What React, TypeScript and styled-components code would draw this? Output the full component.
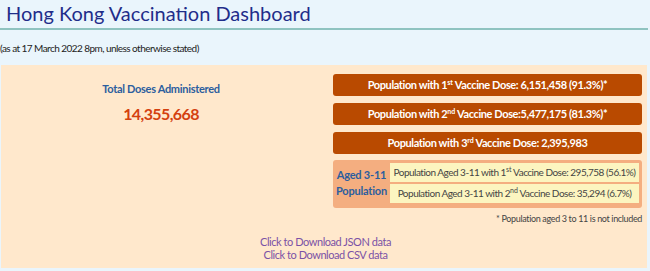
import React from "react";
import styled, { createGlobalStyle } from "styled-components";

const GlobalStyle = createGlobalStyle`
  body {
    margin: 0;
    background-color: #eaf5fc;
    font-family: "Lato", "Liberation Sans", sans-serif;
  }
`;

const Page = styled.div`
  width: 650px;
  height: 271px;
  overflow: hidden;
`;

const Header = styled.h1`
  margin: 0 2px 0 0;
  padding: 0 0 0 6px;
  height: 28px;
  line-height: 26px;
  font-size: 20px;
  font-weight: 400;
  color: #1f2d8a;
  border-bottom: 2px solid #8fc3c0;
`;

const Subtitle = styled.p`
  margin: 0;
  height: 35px;
  line-height: 37px;
  font-size: 10px;
  letter-spacing: -0.55px;
  color: #222;
`;

const Panel = styled.div`
  margin: 0 3px 0 1px;
  height: 203px;
  box-sizing: border-box;
  background-color: #ffe8cc;
  padding: 9px 5px 0 0;
  display: grid;
  grid-template-columns: 1fr 309px;
  grid-template-rows: auto auto 1fr;
  column-gap: 12px;
`;

const TotalBlock = styled.div`
  text-align: center;
  padding-top: 8px;
`;

const TotalLabel = styled.div`
  font-size: 11px;
  font-weight: 700;
  letter-spacing: -0.3px;
  color: #2c5e9e;
`;

const TotalValue = styled.div`
  margin-top: 9px;
  font-size: 16px;
  font-weight: 700;
  letter-spacing: -0.6px;
  color: #d4400f;
`;

const Stats = styled.div`
  display: flex;
  flex-direction: column;
  gap: 7px;
  min-width: 0;
`;

const Sup = styled.sup`
  font-size: 7px;
  line-height: 0;
  vertical-align: 4px;
  letter-spacing: 0;
`;

const DoseBar = styled.div`
  height: 22px;
  line-height: 22px;
  border-radius: 3px;
  background-color: #b94a00;
  color: #fff;
  font-size: 11px;
  font-weight: 700;
  letter-spacing: -0.4px;
  text-align: center;
  white-space: nowrap;
`;

const AgedBox = styled.div`
  margin-top: -1px;
  border-radius: 3px;
  background-color: #f4ae80;
  padding: 3px 3px 5px 0;
  display: flex;
  align-items: center;
`;

const AgedLabel = styled.div`
  flex: 0 0 57px;
  text-align: center;
  font-size: 11px;
  font-weight: 700;
  letter-spacing: -0.2px;
  line-height: 16px;
  color: #2c5e9e;
`;

const AgedRows = styled.div`
  flex: 1;
  min-width: 0;
  display: flex;
  flex-direction: column;
  gap: 2px;
`;

const AgedRow = styled.div`
  height: 19px;
  line-height: 19px;
  background-color: #fcf5c0;
  color: #444;
  font-size: 10px;
  letter-spacing: -0.5px;
  text-align: center;
  white-space: nowrap;
  overflow: hidden;
`;

const Footnote = styled.div`
  grid-column: 2;
  margin-top: 5px;
  text-align: right;
  font-size: 9px;
  letter-spacing: -0.35px;
  color: #444;
`;

const Downloads = styled.div`
  grid-column: 1 / span 2;
  margin-top: 11px;
  display: flex;
  flex-direction: column;
  align-items: center;
  padding-left: 8px;
`;

const DownloadLink = styled.a`
  font-size: 11px;
  line-height: 13px;
  letter-spacing: -0.45px;
  color: #7b52a6;
  text-decoration: none;
  cursor: pointer;
`;

const App = () => {
  return (
    <Page>
      <GlobalStyle />
      <Header>Hong Kong Vaccination Dashboard</Header>
      <Subtitle>(as at 17 March 2022 8pm, unless otherwise stated)</Subtitle>
      <Panel>
        <TotalBlock>
          <TotalLabel>Total Doses Administered</TotalLabel>
          <TotalValue>14,355,668</TotalValue>
        </TotalBlock>
        <Stats>
          <DoseBar>
            Population with 1<Sup>st</Sup> Vaccine Dose: 6,151,458 (91.3%)*
          </DoseBar>
          <DoseBar>
            Population with 2<Sup>nd</Sup> Vaccine Dose:5,477,175 (81.3%)*
          </DoseBar>
          <DoseBar>
            Population with 3<Sup>rd</Sup> Vaccine Dose: 2,395,983
          </DoseBar>
          <AgedBox>
            <AgedLabel>
              Aged 3-11
              <br />
              Population
            </AgedLabel>
            <AgedRows>
              <AgedRow>
                Population Aged 3-11 with 1<Sup>st</Sup> Vaccine Dose: 295,758 (56.1%)
              </AgedRow>
              <AgedRow>
                Population Aged 3-11 with 2<Sup>nd</Sup> Vaccine Dose: 35,294 (6.7%)
              </AgedRow>
            </AgedRows>
          </AgedBox>
        </Stats>
        <Footnote>* Population aged 3 to 11 is not included</Footnote>
        <Downloads>
          <DownloadLink>Click to Download JSON data</DownloadLink>
          <DownloadLink>Click to Download CSV data</DownloadLink>
        </Downloads>
      </Panel>
    </Page>
  );
};

export default App;
